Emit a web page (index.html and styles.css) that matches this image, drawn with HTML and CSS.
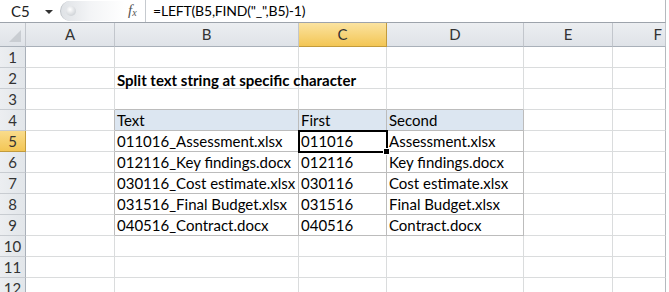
FILE: index.html
```html
<!DOCTYPE html>
<html lang="en">
<head>
  <meta charset="UTF-8">
  <title>Split text string</title>
  <link rel="stylesheet" href="styles.css">
</head>
<body>
  <div class="formula-bar">
    <div class="name-box">C5<span class="caret"></span></div>
    <div class="grip"><span class="knob"></span></div>
    <div class="fx">f<sub>x</sub></div>
    <div class="formula">=LEFT(B5,FIND("_",B5)-1)</div>
  </div>

  <div class="sheet">
    <div class="corner"><span class="tri"></span></div>
    <div class="col-head">A</div>
    <div class="col-head">B</div>
    <div class="col-head active">C</div>
    <div class="col-head">D</div>
    <div class="col-head">E</div>
    <div class="col-head last">F</div>

    <div class="row-head">1</div>
    <div class="cell"></div><div class="cell"></div><div class="cell"></div><div class="cell"></div><div class="cell"></div><div class="cell last"></div>

    <div class="row-head">2</div>
    <div class="cell"></div><div class="cell title">Split text string at specific character</div><div class="cell"></div><div class="cell"></div><div class="cell"></div><div class="cell last"></div>

    <div class="row-head">3</div>
    <div class="cell"></div><div class="cell above"></div><div class="cell above"></div><div class="cell above"></div><div class="cell"></div><div class="cell last"></div>

    <div class="row-head">4</div>
    <div class="cell before"></div><div class="cell t th">Text</div><div class="cell t th">First</div><div class="cell t th">Second</div><div class="cell"></div><div class="cell last"></div>

    <div class="row-head active">5</div>
    <div class="cell before"></div><div class="cell t">011016_Assessment.xlsx</div><div class="cell t selected">011016</div><div class="cell t">Assessment.xlsx</div><div class="cell"></div><div class="cell last"></div>

    <div class="row-head">6</div>
    <div class="cell before"></div><div class="cell t">012116_Key findings.docx</div><div class="cell t">012116</div><div class="cell t">Key findings.docx</div><div class="cell"></div><div class="cell last"></div>

    <div class="row-head">7</div>
    <div class="cell before"></div><div class="cell t">030116_Cost estimate.xlsx</div><div class="cell t">030116</div><div class="cell t">Cost estimate.xlsx</div><div class="cell"></div><div class="cell last"></div>

    <div class="row-head">8</div>
    <div class="cell before"></div><div class="cell t">031516_Final Budget.xlsx</div><div class="cell t">031516</div><div class="cell t">Final Budget.xlsx</div><div class="cell"></div><div class="cell last"></div>

    <div class="row-head">9</div>
    <div class="cell before"></div><div class="cell t">040516_Contract.docx</div><div class="cell t">040516</div><div class="cell t">Contract.docx</div><div class="cell"></div><div class="cell last"></div>

    <div class="row-head">10</div>
    <div class="cell"></div><div class="cell"></div><div class="cell"></div><div class="cell"></div><div class="cell"></div><div class="cell last"></div>

    <div class="row-head">11</div>
    <div class="cell"></div><div class="cell"></div><div class="cell"></div><div class="cell"></div><div class="cell"></div><div class="cell last"></div>

    <div class="row-head">12</div>
    <div class="cell"></div><div class="cell"></div><div class="cell"></div><div class="cell"></div><div class="cell"></div><div class="cell last"></div>
  </div>
</body>
</html>
```

FILE: styles.css
```css
body {
  margin: 0;
  width: 669px;
  height: 292px;
  overflow: hidden;
  background: #fff;
  font-family: Lato, "Liberation Sans", sans-serif;
  color: #000;
}

/* formula bar */
.formula-bar {
  display: flex;
  align-items: center;
  height: 23px;
  border-bottom: 1px solid #9da3ab;
  box-sizing: border-box;
  width: 666px;
  border-right: 1px solid #b5b9be;
}

.name-box {
  position: relative;
  width: 57px;
  height: 22px;
  padding-left: 11px;
  box-sizing: border-box;
  font-size: 15px;
  line-height: 22px;
  color: #222;
}

.caret {
  position: absolute;
  left: 45px;
  top: 10px;
  border-left: 4px solid transparent;
  border-right: 4px solid transparent;
  border-top: 4px solid #333;
}

.grip {
  width: 64px;
  height: 20px;
  margin-left: 3px;
  border-radius: 10px 0 0 10px;
  background: linear-gradient(to right, #dfe2e6, #f3f4f6 45%, #fff);
  border-left: 1px solid #bfc3c8;
  display: flex;
  align-items: center;
}

.knob {
  width: 10px;
  height: 10px;
  margin-left: 5px;
  border-radius: 50%;
  background: radial-gradient(circle at 40% 35%, #fff, #bfc4ca);
}

.fx {
  width: 17px;
  height: 22px;
  margin-left: 3px;
  border-right: 1px solid #c6cacf;
  font-family: "Liberation Serif", serif;
  font-style: italic;
  font-size: 15px;
  line-height: 20px;
  color: #555;
}

.fx sub {
  font-size: 10px;
  vertical-align: -1px;
}

.formula {
  padding-left: 7px;
  font-size: 14px;
  letter-spacing: -0.2px;
  line-height: 22px;
}

/* grid */
.sheet {
  display: grid;
  grid-template-columns: 26px 89px 184px 88px 137px 89px 53px;
  grid-template-rows: 24px repeat(12, 21px);
  font-size: 15px;
}

.corner,
.col-head,
.row-head {
  box-sizing: border-box;
  background: linear-gradient(#eceef1, #dfe3e8);
  border-right: 1px solid #c2c6cc;
  border-bottom: 1px solid #a9b0b9;
  color: #333;
  text-align: center;
}

.corner {
  position: relative;
}

.tri {
  position: absolute;
  right: 4px;
  bottom: 4px;
  border-left: 12px solid transparent;
  border-bottom: 12px solid #c9cdd2;
}

.col-head {
  line-height: 23px;
  font-size: 15px;
}

.col-head.last {
  text-align: right;
  padding-right: 3px;
}

.row-head {
  background: linear-gradient(to right, #eceef1, #e2e6ea);
  border-bottom: 1px solid #c8ccd1;
  border-right: 1px solid #a9b0b9;
  line-height: 21px;
  font-size: 15px;
}

.col-head.active {
  background: linear-gradient(#fbe3a0, #f3c655);
  border-right-color: #c29b3c;
  border-bottom-color: #c29b3c;
}

.row-head.active {
  background: linear-gradient(#f9dc8c, #f3c655);
  border-bottom-color: #c29b3c;
  border-right-color: #c29b3c;
}

.cell {
  box-sizing: border-box;
  border-right: 1px solid #dadcdd;
  border-bottom: 1px solid #dadcdd;
  padding-left: 2px;
  line-height: 21px;
  white-space: nowrap;
}

.cell.last {
  border-right-color: #b5b9be;
}

.cell.title {
  font-weight: bold;
  line-height: 24px;
}

.cell.above {
  border-bottom-color: #bcbcbc;
}

.cell.before {
  border-right-color: #bcbcbc;
}

.cell.t {
  border-right-color: #bcbcbc;
  border-bottom-color: #bcbcbc;
}

.cell.th {
  background: #dce6f1;
}

.cell.selected {
  position: relative;
  outline: 2px solid #000;
  outline-offset: -1px;
}

.cell.selected::after {
  content: "";
  position: absolute;
  right: -4px;
  bottom: -4px;
  width: 5px;
  height: 5px;
  background: #000;
  border: 1px solid #fff;
}
```
